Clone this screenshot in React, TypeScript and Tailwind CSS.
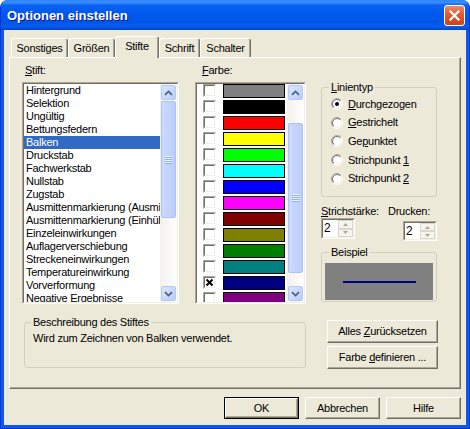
import React from "react";

// Pen list shown in the "Stift" listbox
const pens = [
  "Hintergrund",
  "Selektion",
  "Ungültig",
  "Bettungsfedern",
  "Balken",
  "Druckstab",
  "Fachwerkstab",
  "Nullstab",
  "Zugstab",
  "Ausmittenmarkierung (Ausmittigkeit)",
  "Ausmittenmarkierung (Einhüllende)",
  "Einzeleinwirkungen",
  "Auflagerverschiebung",
  "Streckeneinwirkungen",
  "Temperatureinwirkung",
  "Vorverformung",
  "Negative Ergebnisse",
];
const selectedPen = 4;

// Palette rows in the "Farbe" listbox
const swatches = [
  "bg-[#808080]",
  "bg-[#000000]",
  "bg-[#FF0000]",
  "bg-[#FFFF00]",
  "bg-[#00FF00]",
  "bg-[#00FFFF]",
  "bg-[#0000FF]",
  "bg-[#FF00FF]",
  "bg-[#800000]",
  "bg-[#808000]",
  "bg-[#008000]",
  "bg-[#008080]",
  "bg-[#000080]",
  "bg-[#800080]",
];
const checkedSwatch = 12;

const tabs = [
  { label: "Sonstiges", w: "w-[57px]" },
  { label: "Größen", w: "w-[47px]" },
  { label: "Stifte", w: "w-[44px]", active: true },
  { label: "Schrift", w: "w-[41px]" },
  { label: "Schalter", w: "w-[51px]" },
];

function Sunken({ className = "", children }: { className?: string; children?: React.ReactNode }) {
  return (
    <div className={`border border-t-[#ACA899] border-l-[#ACA899] border-b-white border-r-white ${className}`}>
      <div className="w-full h-full border border-t-[#716F64] border-l-[#716F64] border-b-[#F1EFE2] border-r-[#F1EFE2] bg-white flex overflow-hidden">
        {children}
      </div>
    </div>
  );
}

function ScrollArrow({ down = false }: { down?: boolean }) {
  return (
    <div className="h-[17px] p-px shrink-0">
      <div className="h-full rounded-[2px] border border-[#B4C8F6] bg-[linear-gradient(135deg,#DCE6FE,#BACCF8)] flex items-center justify-center">
        <svg width="9" height="6" viewBox="0 0 9 6">
          <polyline
            points={down ? "1,1.2 4.5,4.6 8,1.2" : "1,4.8 4.5,1.4 8,4.8"}
            fill="none"
            stroke="#4D6185"
            strokeWidth="1.8"
          />
        </svg>
      </div>
    </div>
  );
}

function ScrollBar({ offset, size }: { offset: number; size: number }) {
  return (
    <div className="w-[17px] h-full shrink-0 flex flex-col bg-[linear-gradient(90deg,#F3F1EC,#FEFEFB)]">
      <ScrollArrow />
      <div className="flex-1 flex flex-col">
        <div style={{ height: offset }} />
        <div
          style={{ height: size }}
          className="mx-px rounded-[2px] border border-[#AEC2F2] bg-[linear-gradient(90deg,#CCDAFD,#BBCDF8)] flex flex-col items-center justify-center"
        >
          {[0, 1, 2, 3].map((i) => (
            <div key={i} className="w-[7px] h-[2px] border-t border-t-[#EEF4FE] border-b border-b-[#8CB0F8]" />
          ))}
        </div>
      </div>
      <ScrollArrow down />
    </div>
  );
}

function Check({ checked = false }: { checked?: boolean }) {
  return (
    <div className="w-[13px] h-[13px] shrink-0 border border-t-[#ACA899] border-l-[#ACA899] border-b-white border-r-white">
      <div className="w-full h-full border border-t-[#716F64] border-l-[#716F64] border-b-[#F1EFE2] border-r-[#F1EFE2] bg-white flex items-center justify-center">
        {checked && (
          <svg width="9" height="9" viewBox="0 0 9 9">
            <path d="M1.5 1.5L7.5 7.5M7.5 1.5L1.5 7.5" stroke="#000" strokeWidth="2" />
          </svg>
        )}
      </div>
    </div>
  );
}

function Radio({ id, checked = false }: { id: number; checked?: boolean }) {
  return (
    <svg width="12" height="12" viewBox="0 0 12 12" className="shrink-0">
      <defs>
        <linearGradient id={`radio-out-${id}`} x1="0" y1="0" x2="1" y2="1">
          <stop offset="0.5" stopColor="#ACA899" />
          <stop offset="0.5" stopColor="#FFFFFF" />
        </linearGradient>
        <linearGradient id={`radio-in-${id}`} x1="0" y1="0" x2="1" y2="1">
          <stop offset="0.5" stopColor="#716F64" />
          <stop offset="0.5" stopColor="#F1EFE2" />
        </linearGradient>
      </defs>
      <circle cx="6" cy="6" r="5.5" fill="none" stroke={`url(#radio-out-${id})`} />
      <circle cx="6" cy="6" r="4.5" fill="#FFFFFF" stroke={`url(#radio-in-${id})`} />
      {checked && <circle cx="6" cy="6" r="2" fill="#000" />}
    </svg>
  );
}

function SpinButton({ up = false }: { up?: boolean }) {
  return (
    <div className="flex-1 border border-[#DAD7CB] bg-[#F5F4EF] flex items-center justify-center">
      <svg width="5" height="3" viewBox="0 0 5 3">
        <polygon points={up ? "0,3 2.5,0 5,3" : "0,0 2.5,3 5,0"} fill="#A9A69A" />
      </svg>
    </div>
  );
}

function Spin({ className = "" }: { className?: string }) {
  return (
    <Sunken className={`w-[34px] ${className}`}>
      <div className="flex-1 pl-px text-[12px] leading-[14px] pt-px">2</div>
      <div className="w-[15px] flex flex-col">
        <SpinButton up />
        <SpinButton />
      </div>
    </Sunken>
  );
}

function Button({
  children,
  isDefault = false,
  className = "",
}: {
  children: React.ReactNode;
  isDefault?: boolean;
  className?: string;
}) {
  const face = (
    <div className="w-full h-full border border-t-white border-l-white border-b-[#716F64] border-r-[#716F64] shadow-[inset_-1px_-1px_0_#ACA899] bg-[#ECE9D8] flex items-center justify-center">
      {children}
    </div>
  );
  return isDefault ? (
    <div className={`border border-black ${className}`}>{face}</div>
  ) : (
    <div className={className}>{face}</div>
  );
}

export default function App() {
  return (
    <div className="w-[470px] h-[429px] bg-white font-['Liberation_Sans',Arial,sans-serif] text-[11px] leading-[13px] tracking-[-0.25px] text-black">
      <div className="w-full h-full flex flex-col rounded-t-[8px] overflow-hidden border-x border-b border-[#0831D9] bg-[#0B5BE8]">
        {/* Title bar */}
        <div className="h-[30px] shrink-0 flex items-center pl-[6px] pr-[4px] pt-px bg-[linear-gradient(180deg,#2E83FF_0%,#3B8FFF_8%,#0A62F2_18%,#0058EE_45%,#0056EA_75%,#0A5DEC_88%,#0043D0_100%)]">
          <span className="font-bold text-[13px] tracking-normal text-white [text-shadow:1px_1px_0_#0A1883]">
            Optionen einstellen
          </span>
          <div className="ml-auto w-[21px] h-[21px] rounded-[3px] border border-white bg-[linear-gradient(180deg,#EC8B6B_0%,#E15A30_45%,#CC4219_100%)] flex items-center justify-center">
            <svg width="19" height="19" viewBox="0 0 19 19">
              <path d="M5.5 5.5L13.5 13.5M13.5 5.5L5.5 13.5" stroke="#FFFFFF" strokeWidth="2.2" strokeLinecap="square" />
            </svg>
          </div>
        </div>

        {/* Dialog body */}
        <div className="flex-1 mx-[3px] mb-[3px] bg-[#ECE9D8] flex flex-col px-[5px] pt-[6px]">
          {/* Tab strip */}
          <div className="h-[21px] flex items-end pl-[2px]">
            {tabs.map((t) =>
              t.active ? (
                <div
                  key={t.label}
                  className={`${t.w} h-[22px] -mb-px relative z-10 bg-[#ECE9D8] pb-[2px] flex items-center justify-center border-t border-l border-r border-t-white border-l-white border-r-[#716F64] rounded-t-[3px] shadow-[inset_-1px_0_0_#ACA899]`}
                >
                  {t.label}
                </div>
              ) : (
                <div
                  key={t.label}
                  className={`${t.w} h-[19px] flex items-center justify-center border-t border-l border-r border-t-white border-l-white border-r-[#716F64] rounded-t-[3px] shadow-[inset_-1px_0_0_#ACA899]`}
                >
                  {t.label}
                </div>
              )
            )}
          </div>

          {/* Tab page */}
          <div className="h-[332px] shrink-0 border border-t-white border-l-white border-r-[#716F64] border-b-[#716F64] shadow-[inset_-1px_-1px_0_#ACA899] flex flex-col">
            <div className="flex items-start">
              {/* Pens */}
              <div className="ml-[12px] w-[157px] flex flex-col">
                <div className="mt-[6px] h-[13px] pl-[3px]">
                  <u>S</u>tift:
                </div>
                <Sunken className="mt-[5px] h-[222px]">
                  <div className="flex-1 min-w-0 overflow-hidden flex flex-col">
                    {pens.map((p, i) => (
                      <div
                        key={p}
                        className={`h-[13px] shrink-0 pl-[2px] whitespace-nowrap ${
                          i === selectedPen ? "bg-[#316AC5] text-white" : ""
                        }`}
                      >
                        {p}
                      </div>
                    ))}
                  </div>
                  <ScrollBar offset={0} size={117} />
                </Sunken>
              </div>

              {/* Colours */}
              <div className="ml-[16px] w-[111px] flex flex-col">
                <div className="mt-[6px] h-[13px] pl-[7px]">
                  <u>F</u>arbe:
                </div>
                <Sunken className="mt-[5px] h-[222px]">
                  <div className="flex-1 min-w-0 overflow-hidden flex flex-col">
                    {swatches.map((s, i) => (
                      <div key={s} className="h-[16px] shrink-0 flex items-start">
                        <div className="ml-[6px]">
                          <Check checked={i === checkedSwatch} />
                        </div>
                        <div className={`ml-[7px] w-[62px] h-[14px] border border-black ${s}`} />
                      </div>
                    ))}
                  </div>
                  <ScrollBar offset={22} size={150} />
                </Sunken>
              </div>

              {/* Line settings */}
              <div className="ml-[15px] w-[116px] flex flex-col">
                <fieldset className="mt-[23px] h-[116px] border border-[#D0D0BF] rounded-[3px]">
                  <legend className="ml-[7px] px-[2px] h-[13px] leading-[13px]">
                    <u>L</u>inientyp
                  </legend>
                  <div className="pl-[9px] pt-px flex flex-col">
                    {[
                      <>
                        <u>D</u>urchgezogen
                      </>,
                      <>
                        <u>G</u>estrichelt
                      </>,
                      <>
                        Ge<u>p</u>unktet
                      </>,
                      <>
                        Strichpunkt <u>1</u>
                      </>,
                      <>
                        Strichpunkt <u>2</u>
                      </>,
                    ].map((label, i) => (
                      <div key={i} className="h-[18.6px] flex items-center">
                        <Radio id={i} checked={i === 0} />
                        <span className="ml-[5px]">{label}</span>
                      </div>
                    ))}
                  </div>
                </fieldset>

                <div className="mt-[8px] flex items-start">
                  <div className="flex flex-col">
                    <div className="h-[13px]">
                      <u>S</u>trichstärke:
                    </div>
                    <Spin className="h-[21px]" />
                  </div>
                  <div className="ml-auto flex flex-col items-end">
                    <div className="h-[13px] pr-[7px]">Drucken:</div>
                    <Spin className="mt-[3px] h-[20px]" />
                  </div>
                </div>

                <fieldset className="mt-[5px] h-[56px] border border-[#D0D0BF] rounded-[3px]">
                  <legend className="ml-[7px] px-[2px] h-[13px] leading-[13px]">Beispiel</legend>
                  <div className="px-[3px] pt-[4px]">
                    <div className="h-[37px] bg-[#808080] flex items-center justify-center">
                      <div className="w-[73px] h-[2px] bg-[#000080]" />
                    </div>
                  </div>
                </fieldset>
              </div>
            </div>

            {/* Description and actions */}
            <div className="flex items-start">
              <fieldset className="ml-[14px] mt-[12px] w-[282px] h-[52px] border border-[#D0D0BF] rounded-[3px]">
                <legend className="ml-[6px] px-[2px] h-[13px] leading-[13px]">Beschreibung des Stiftes</legend>
                <div className="pl-[8px] pt-[3px]">Wird zum Zeichnen von Balken verwendet.</div>
              </fieldset>
              <div className="ml-[21px] mt-[16px] w-[111px] flex flex-col gap-[3px]">
                <Button className="h-[23px]">
                  Alles&nbsp;<u>Z</u>urücksetzen
                </Button>
                <Button className="h-[23px]">
                  Farbe&nbsp;<u>d</u>efinieren ...
                </Button>
              </div>
            </div>
          </div>

          {/* Dialog buttons */}
          <div className="mt-[8px] flex justify-end gap-[6px]">
            <Button isDefault className="w-[75px] h-[22px]">
              OK
            </Button>
            <Button className="w-[75px] h-[22px]">Abbrechen</Button>
            <Button className="w-[75px] h-[22px]">Hilfe</Button>
          </div>
        </div>
      </div>
    </div>
  );
}
